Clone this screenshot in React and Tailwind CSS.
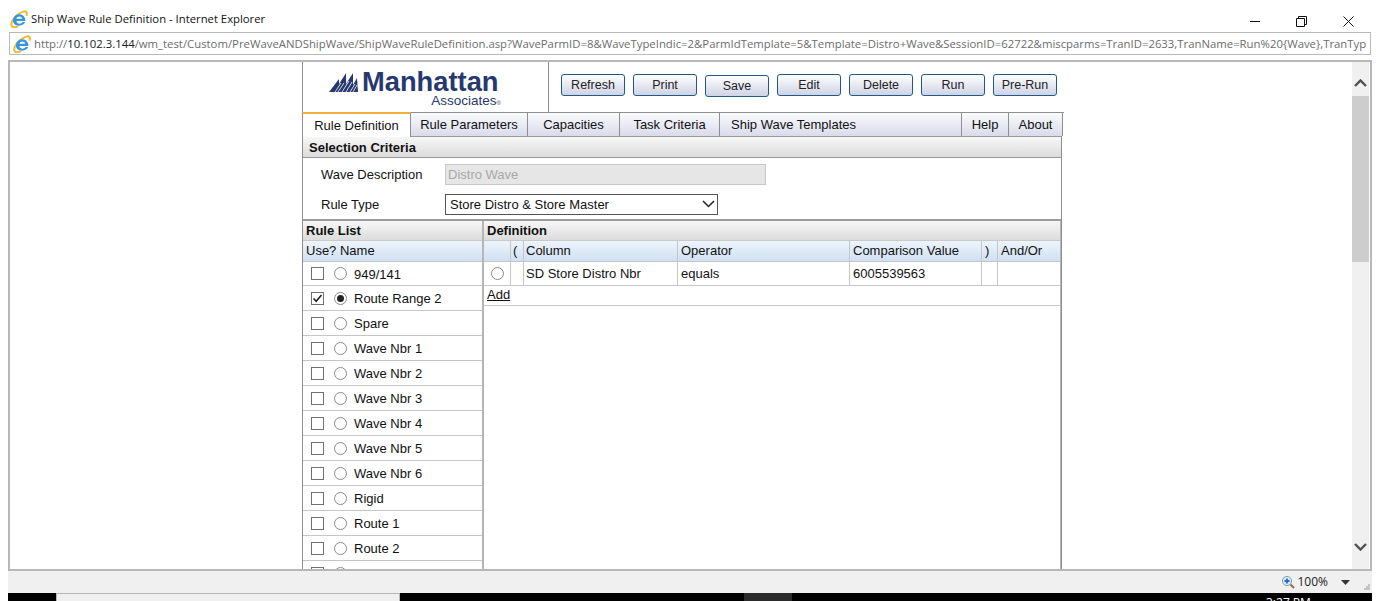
import React from 'react'

const ui = { fontFamily: '"Liberation Sans", Arial, sans-serif' }
const chrome = { fontFamily: '"Open Sans", sans-serif' }

const rules = [
  '949/141', 'Route Range 2', 'Spare', 'Wave Nbr 1', 'Wave Nbr 2', 'Wave Nbr 3', 'Wave Nbr 4',
  'Wave Nbr 5', 'Wave Nbr 6', 'Rigid', 'Route 1', 'Route 2', 'Route 3',
]
const buttons = ['Refresh', 'Print', 'Save', 'Edit', 'Delete', 'Run', 'Pre-Run']
const cols = 'grid grid-cols-[27px_13px_154px_172px_132px_16px_62px]'

function IeIcon() {
  return (
    <svg width="18" height="18" viewBox="0 0 18 18" className="shrink-0">
      <path d="M1.6 16C-.2 12.5 5.5 4 13.4 1.6c3-.9 4.2 1 3 4.2" fill="none" stroke="#f3b92f" strokeWidth="2" />
      <path d="M1.6 16c1 1.7 4.4 1.2 6.6.2" fill="none" stroke="#f3b92f" strokeWidth="2" />
      <path d="M3 10a6.2 6.2 0 0 1 12.3-.6l.1 1.7H6.3c.4 3 4.7 3.4 6.3 1h2.6c-2 5.3-12.7 4.8-12.2-2.1zM6.4 8.7h5.8c-.4-2.8-5.3-2.8-5.8 0z" fill="#3795dd" fillRule="evenodd" />
    </svg>
  )
}

function LogoMark() {
  return (
    <svg width="29" height="21" viewBox="0 0 29 21" className="shrink-0 mb-[1px]">
      <polygon points="0,20 10,7 10,20" fill="#27386f" />
      <polygon points="5,20 17,1 17,20" fill="#27386f" />
      <polygon points="12,20 24,1 24,20" fill="#27386f" />
      <polygon points="20,20 28,6 29,20" fill="#27386f" />
      <path d="M6 20 12 11M9 20l6-9M13 20l7-11M17 20l6-10M21 20l5-8M24 20l4-7" stroke="#fff" strokeWidth=".8" />
    </svg>
  )
}

function Check({ on }) {
  return (
    <span className="w-[13px] h-[13px] border border-[#707070] bg-white flex items-center justify-center shrink-0">
      {on && (
        <svg width="11" height="11" viewBox="0 0 11 11">
          <path d="M1.5 5.5 4.2 8.3 9.5 2" fill="none" stroke="#222" strokeWidth="1.6" />
        </svg>
      )}
    </span>
  )
}

function Radio({ on }) {
  return (
    <span className="w-[13px] h-[13px] rounded-full border border-[#8a8a8a] bg-white flex items-center justify-center shrink-0">
      {on && <span className="w-[7px] h-[7px] rounded-full bg-[#222]" />}
    </span>
  )
}

function Tab({ w, active, children }) {
  if (active) {
    return (
      <div className={`${w} h-[25px] -mt-[1px] bg-white border-t-2 border-t-[#f0b23c] border-r border-l border-[#8f8f8f] flex items-center justify-center relative z-10`}>
        {children}
      </div>
    )
  }
  return (
    <div className={`${w} h-full border-r border-[#8f8f8f] bg-gradient-to-b from-[#fbfbfd] to-[#d9dbea] flex items-center justify-center`}>
      {children}
    </div>
  )
}

function HeadCell({ children, cls = '' }) {
  return <div className={`h-[20px] border-r border-[#c3c7cc] px-[3px] flex items-center truncate ${cls}`}>{children}</div>
}

export default function App() {
  return (
    <div className="w-[1380px] h-[601px] overflow-hidden bg-white flex flex-col text-[13px] text-[#111]" style={ui}>
      {/* Window title */}
      <div className="h-[32px] shrink-0 flex items-center pl-[10px] pr-[26px] pt-[6px]">
        <IeIcon />
        <span className="ml-[3px] text-[11.3px] text-[#111]" style={chrome}>
          Ship Wave Rule Definition - Internet Explorer
        </span>
        <div className="ml-auto flex items-center gap-[36px] pt-[5px]">
          <span className="w-[10px] h-[1px] bg-[#111]" />
          <svg width="11" height="11" viewBox="0 0 11 11">
            <path d="M.5 2.5h8v8h-8zM2.5 2.5v-2h8v8h-2" fill="none" stroke="#111" />
          </svg>
          <svg width="11" height="11" viewBox="0 0 11 11">
            <path d="M.5.5l10 10M10.5.5l-10 10" fill="none" stroke="#111" />
          </svg>
        </div>
      </div>

      {/* Address bar */}
      <div className="h-[23px] shrink-0 ml-[9px] mr-[9px] border border-[#b9b9b9] flex items-center pl-[3px] overflow-hidden whitespace-nowrap text-[11.35px] text-[#6d6d6d]" style={chrome}>
        <IeIcon />
        <span className="ml-[3px]">http://</span>
        <span className="text-[#222]">10.102.3.144</span>
        <span>/wm_test/Custom/PreWaveANDShipWave/ShipWaveRuleDefinition.asp?WaveParmID=8&amp;WaveTypeIndic=2&amp;ParmIdTemplate=5&amp;Template=Distro+Wave&amp;SessionID=62722&amp;miscparms=TranID=2633,TranName=Run%20{'{'}Wave{'}'},TranTyp</span>
      </div>

      {/* Browser frame */}
      <div className="h-[511px] shrink-0 mt-[5px] mx-[8px] border-2 border-[#b8b8b8] flex overflow-hidden">
        <div className="flex-1 min-w-0 pl-[292px] overflow-hidden">
          <div className="w-[761px] border-l border-[#8f8f8f]">
            {/* Logo + action buttons */}
            <div className="h-[50px] flex">
              <div className="w-[246px] h-full border-r border-[#8f8f8f] pl-[26px] pt-[8px]">
                <div className="flex items-end gap-[4px] h-[24px]">
                  <LogoMark />
                  <span className="text-[27.3px] leading-[24px] font-bold text-[#27386f]">Manhattan</span>
                </div>
                <div className="w-[172px] text-right text-[13.5px] leading-[12px] text-[#27386f] mt-[1px]">
                  Associates<span className="text-[6px]">®</span>
                </div>
              </div>
              <div className="flex gap-[8px] pl-[12px] pt-[12px]">
                {buttons.map(b => (
                  <button
                    key={b}
                    className={`w-[64px] h-[22px] border border-[#1f5b86] rounded-[3px] bg-gradient-to-b from-[#ffffff] to-[#cfd3e4] text-[12.5px] leading-none text-[#222] ${b === 'Save' ? 'mt-[1px]' : ''}`}
                  >
                    {b}
                  </button>
                ))}
              </div>
            </div>

            {/* Tabs */}
            <div className="h-[24px] -ml-[1px] flex border-t border-[#8f8f8f] w-[762px]">
              <Tab w="w-[109px]" active>Rule Definition</Tab>
              <Tab w="w-[117px]">Rule Parameters</Tab>
              <Tab w="w-[92px]">Capacities</Tab>
              <Tab w="w-[100px]">Task Criteria</Tab>
              <Tab w="w-[242px]"><span className="w-full pl-[11px]">Ship Wave Templates</span></Tab>
              <Tab w="w-[47px]">Help</Tab>
              <Tab w="w-[54px]">About</Tab>
            </div>

            <div className="border-r border-[#8f8f8f] w-[759px]">
              {/* Selection criteria */}
              <div className="h-[22px] border-y border-[#999] bg-gradient-to-b from-[#f7f7f7] to-[#dcdcdc] flex items-center pl-[6px] pt-[1px] font-bold">
                Selection Criteria
              </div>
              <div className="h-[61px]">
                <div className="h-[32px] flex items-center pl-[18px]">
                  <span className="w-[124px] pt-[1px]">Wave Description</span>
                  <div className="w-[321px] h-[21px] border border-[#c8c8c8] bg-[#e6e6e6] text-[#a8a8a8] flex items-center pl-[2px] pt-[1px]">
                    Distro Wave
                  </div>
                </div>
                <div className="h-[28px] flex items-center pl-[18px]">
                  <span className="w-[124px] pt-[1px]">Rule Type</span>
                  <div className="w-[273px] h-[21px] border border-[#555] bg-white flex items-center pl-[4px] justify-between pr-[2px]">
                    <span className="pt-[1px]">Store Distro &amp; Store Master</span>
                    <svg width="13" height="8" viewBox="0 0 13 8"><path d="M1 1l5.5 5.5L12 1" fill="none" stroke="#222" strokeWidth="1.5" /></svg>
                  </div>
                </div>
              </div>

              {/* Rule list + definition */}
              <div className="flex h-[350px] border-t-2 border-[#9c9c9c] overflow-hidden">
                <div className="w-[181px] shrink-0 border-r-2 border-[#b5b5b5]">
                  <div className="h-[20px] bg-gradient-to-b from-[#f7f7f7] to-[#dcdcdc] border-b border-[#c9c9c9] flex items-center pl-[3px] font-bold">Rule List</div>
                  <div className="h-[20px] bg-gradient-to-b from-[#eef4fb] to-[#cfe0f3] flex items-center pl-[3px]">Use? Name</div>
                  {rules.map((r, i) => (
                    <div key={r} className={`h-[25px] border-b border-[#c6c6c6] flex items-center pl-[8px] ${i === 0 ? 'border-t border-t-[#c6c6c6]' : ''}`}>
                      <Check on={i === 1} />
                      <span className="ml-[10px]"><Radio on={i === 1} /></span>
                      <span className="ml-[7px] pt-[2px]">{r}</span>
                    </div>
                  ))}
                </div>

                <div className="flex-1 min-w-0 border-r border-[#b5b5b5]">
                  <div className="h-[20px] bg-gradient-to-b from-[#f7f7f7] to-[#dcdcdc] border-b border-[#c9c9c9] flex items-center pl-[3px] font-bold">Definition</div>
                  <div className={`${cols} bg-gradient-to-b from-[#eef4fb] to-[#cfe0f3]`}>
                    <HeadCell />
                    <HeadCell cls="!px-[2px]">(</HeadCell>
                    <HeadCell cls="!px-[2px]">Column</HeadCell>
                    <HeadCell>Operator</HeadCell>
                    <HeadCell>Comparison Value</HeadCell>
                    <HeadCell>)</HeadCell>
                    <HeadCell cls="border-r-0">And/Or</HeadCell>
                  </div>
                  <div className={`${cols} h-[25px] border-y border-[#c6c6c6]`}>
                    <div className="border-r border-[#c6c6c6] flex items-center justify-center pl-[1px]"><Radio /></div>
                    <div className="border-r border-[#c6c6c6]" />
                    <div className="border-r border-[#c6c6c6] px-[2px] flex items-center">SD Store Distro Nbr</div>
                    <div className="border-r border-[#c6c6c6] px-[3px] flex items-center">equals</div>
                    <div className="border-r border-[#c6c6c6] px-[3px] flex items-center">6005539563</div>
                    <div className="border-r border-[#c6c6c6]" />
                    <div />
                  </div>
                  <div className="h-[20px] border-b border-[#c6c6c6] flex items-center pl-[3px] pb-[1px]">
                    <span className="underline">Add</span>
                  </div>
                </div>
              </div>
            </div>
          </div>
        </div>

        {/* Scrollbar */}
        <div className="w-[17px] mr-[1px] shrink-0 bg-[#f0f0f0] flex flex-col items-center">
          <div className="h-[34px] w-full flex items-center justify-center pt-[7px]">
            <svg width="13" height="8" viewBox="0 0 13 8"><path d="M1 7l5.5-5.5L12 7" fill="none" stroke="#505050" strokeWidth="2.4" /></svg>
          </div>
          <div className="h-[166px] w-full bg-[#cdcdcd]" />
          <div className="mt-auto h-[34px] w-full flex items-center justify-center pb-[10px]">
            <svg width="13" height="8" viewBox="0 0 13 8"><path d="M1 1l5.5 5.5L12 1" fill="none" stroke="#505050" strokeWidth="2.4" /></svg>
          </div>
        </div>
      </div>

      {/* Status bar */}
      <div className="h-[22px] shrink-0 mx-[8px] bg-[#f0f0f0] flex items-center justify-end pr-[2px] text-[12px] text-[#222]" style={chrome}>
        <svg width="14" height="14" viewBox="0 0 14 14" className="mr-[2px]">
          <circle cx="6" cy="6" r="4.6" fill="#dbeaf8" stroke="#7d9dbd" />
          <path d="M3.5 6h5M6 3.5v5" stroke="#1f6fc4" strokeWidth="1.8" />
          <path d="M9.5 9.5l3.5 3.5" stroke="#9a6a3c" strokeWidth="2" />
        </svg>
        <span>100%</span>
        <svg width="9" height="5" viewBox="0 0 9 5" className="ml-[13px]"><path d="M0 0h9L4.5 5z" fill="#333" /></svg>
        <svg width="7" height="7" viewBox="0 0 7 7" className="ml-[13px] self-end mb-[2px]">
          <path d="M5 0h2v2H5zM3 2h2v2H3zM5 2h2v2H5zM1 4h2v2H1zM3 4h2v2H3zM5 4h2v2H5z" fill="#c4c4c4" />
        </svg>
      </div>

      {/* Taskbar edge */}
      <div className="flex-1 mx-[8px] bg-black flex relative overflow-hidden">
        <div className="ml-[48px] w-[344px] bg-[#f0f0f0] border-l border-t border-r border-[#b5b5b5]" />
        <div className="ml-[344px] w-[48px] bg-[#2b2b2b]" />
        <span className="absolute left-[1258px] top-[4px] text-[12px] leading-none text-white" style={chrome}>3:27 PM</span>
      </div>
    </div>
  )
}
